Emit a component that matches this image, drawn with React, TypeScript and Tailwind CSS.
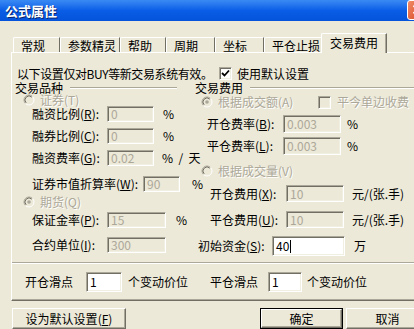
import React from 'react';

const dim = "text-[#ACA899] [text-shadow:1px_1px_0_#ffffff]";
const sunken = "border border-t-[#ACA899] border-l-[#ACA899] border-r-white border-b-white shadow-[inset_1px_1px_0_#716F64,inset_-1px_-1px_0_#F1EFE2]";
const raised = "border border-t-white border-l-white border-r-[#716F64] border-b-[#716F64] shadow-[inset_-1px_-1px_0_#ACA899]";

function Acc({ k }: { k: string }) {
  return <>(<span className="underline underline-offset-1">{k}</span>)</>;
}

function Field({ w, h, value, on }: { w: string; h: string; value: string; on?: boolean }) {
  return (
    <div className={`${w} ${h} shrink-0 ${sunken} flex items-center pl-[3px] ${on ? 'bg-white text-black' : 'bg-[#ECE9D8] text-[#ACA899]'}`}>
      {value}
      {on && value === '40' && <span className="ml-[1px] w-[1px] h-[13px] bg-black" />}
    </div>
  );
}

function Radio({ checked }: { checked?: boolean }) {
  return (
    <svg width="12" height="12" viewBox="0 0 12 12" className="shrink-0">
      <circle cx="6" cy="6" r="5" fill="#ECE9D8" />
      <path d="M2.46 9.54 A5 5 0 0 1 9.54 2.46" stroke="#ACA899" fill="none" />
      <path d="M9.54 2.46 A5 5 0 0 1 2.46 9.54" stroke="#ffffff" fill="none" />
      <path d="M3.17 8.83 A4 4 0 0 1 8.83 3.17" stroke="#716F64" fill="none" />
      {checked && <circle cx="6" cy="6" r="1.8" fill="#ACA899" />}
    </svg>
  );
}

function Check({ checked, on }: { checked?: boolean; on?: boolean }) {
  return (
    <div className={`w-[13px] h-[13px] shrink-0 ${sunken} ${on ? 'bg-white' : 'bg-[#ECE9D8]'} flex items-center justify-center`}>
      {checked && (
        <svg width="9" height="9" viewBox="0 0 9 9">
          <path d="M1 4 L3.5 6.5 L8 1.5" stroke="#000" strokeWidth="1.8" fill="none" />
        </svg>
      )}
    </div>
  );
}

function Etch({ w }: { w: string }) {
  return <div className={`${w} h-[2px] border-t border-t-[#ACA899] border-b border-b-white`} />;
}

const tabs = [
  { t: '常规', w: 'w-[47px]' },
  { t: '参数精灵', w: 'w-[60px]' },
  { t: '帮助', w: 'w-[46px]' },
  { t: '周期', w: 'w-[49px]' },
  { t: '坐标', w: 'w-[49px]' },
  { t: '平仓止损', w: 'w-[59px]' },
];

export default function App() {
  return (
    <div className="w-[414px] h-[329px] overflow-hidden whitespace-nowrap bg-[#ECE9D8] text-[12px] leading-[12px] text-black font-['Noto_Sans_CJK_SC','Noto_Sans',sans-serif]">
      {/* title bar */}
      <div className="h-[21px] flex items-center bg-gradient-to-b from-[#3A8AF4] via-[#0A5DE6] to-[#0553DA]">
        <span className="ml-[5px] text-white font-bold text-[13px] [text-shadow:1px_1px_0_#0A246A]">公式属性</span>
        <div className="ml-auto mr-[-14px] mt-[-2px] w-[21px] h-[20px] rounded-[3px] border border-white bg-gradient-to-br from-[#F08A66] to-[#D6411C] flex items-center justify-center">
          <svg width="11" height="11" viewBox="0 0 11 11">
            <path d="M1.5 1.5 L9.5 9.5 M9.5 1.5 L1.5 9.5" stroke="#fff" strokeWidth="2" />
          </svg>
        </div>
      </div>

      {/* tabs */}
      <div className="relative z-10 mt-[12px] mb-[-1px] h-[20px] flex items-end pl-[13px]">
        {tabs.map((tab) => (
          <div key={tab.t} className={`${tab.w} shrink-0 h-[15px] mb-[1px] pl-[7px] pt-[2px] border-t border-l border-t-white border-l-white border-r border-r-[#716F64] rounded-tl-[2px]`}>
            {tab.t}
          </div>
        ))}
        <div className="relative shrink-0 ml-[-2px] w-[66px] h-[20px] pl-[8px] pt-[3px] bg-[#ECE9D8] border-t border-l border-t-white border-l-white border-r border-r-[#716F64] shadow-[inset_-1px_0_0_#ACA899] rounded-tl-[2px]">
          交易费用
        </div>
      </div>

      {/* panel */}
      <div className="ml-[11px] w-[420px] h-[249px] border-t border-l border-t-white border-l-white border-b border-b-[#716F64] shadow-[inset_0_-1px_0_#ACA899] flex flex-col">
        <div className="mt-[13px] h-[15px] flex items-center">
          <span className="ml-[5px] w-[202px] shrink-0 tracking-[-0.4px]">以下设置仅对BUY等新交易系统有效。</span>
          <Check checked on />
          <span className="ml-[5px]">使用默认设置</span>
        </div>

        <div className="mt-[1px] flex">
          {/* left column */}
          <div className="w-[183px] shrink-0 flex flex-col">
            <div className="h-[12px] flex items-center pl-[3px]">
              <span>交易品种</span>
              <div className="ml-[7px]"><Etch w="w-[107px]" /></div>
            </div>
            <div className="h-[12px] flex items-center pl-[11px] gap-[5px]">
              <Radio />
              <span className={dim}>证券(T)</span>
            </div>
            <div className="h-[16px] flex items-center pl-[20px]">
              <span className="w-[75px] shrink-0">融资比例<Acc k="R" />:</span>
              <Field w="w-[47px]" h="h-[16px]" value="0" />
              <span className="ml-[9px]">%</span>
            </div>
            <div className="mt-[6px] h-[16px] flex items-center pl-[20px]">
              <span className="w-[75px] shrink-0">融券比例<Acc k="C" />:</span>
              <Field w="w-[47px]" h="h-[16px]" value="0" />
              <span className="ml-[9px]">%</span>
            </div>
            <div className="mt-[6px] h-[16px] flex items-center pl-[20px]">
              <span className="w-[75px] shrink-0">融资费率<Acc k="G" />:</span>
              <Field w="w-[47px]" h="h-[16px]" value="0.02" />
              <span className="ml-[8px] whitespace-pre">%  /  天</span>
            </div>
            <div className="mt-[10px] h-[16px] flex items-center pl-[20px]">
              <span className="w-[111px] shrink-0">证券市值折算率<Acc k="W" />:</span>
              <Field w="w-[37px]" h="h-[16px]" value="90" />
              <span className="ml-[12px]">%</span>
            </div>
            <div className="mt-[4px] h-[12px] flex items-center pl-[11px] gap-[5px]">
              <Radio checked />
              <span className={dim}>期货(Q)</span>
            </div>
            <div className="mt-[4px] h-[16px] flex items-center pl-[20px]">
              <span className="w-[75px] shrink-0">保证金率<Acc k="P" />:</span>
              <Field w="w-[59px]" h="h-[16px]" value="15" />
              <span className="ml-[10px]">%</span>
            </div>
            <div className="mt-[9px] h-[16px] flex items-center pl-[20px]">
              <span className="w-[75px] shrink-0">合约单位<Acc k="I" />:</span>
              <Field w="w-[59px]" h="h-[16px]" value="300" />
            </div>
          </div>

          {/* right column */}
          <div className="flex flex-col">
            <div className="h-[12px] flex items-center">
              <span>交易费用</span>
              <div className="ml-[7px]"><Etch w="w-[164px]" /></div>
            </div>
            <div className="mt-[1px] h-[14px] flex items-center pl-[6px]">
              <div className="w-[117px] shrink-0 flex items-center gap-[5px]">
                <Radio checked />
                <span className={dim}>根据成交额(A)</span>
              </div>
              <Check />
              <span className={`ml-[6px] ${dim}`}>平今单边收费</span>
            </div>
            <div className="mt-[6px] h-[18px] flex items-center pl-[12px]">
              <span className="w-[76px] shrink-0">开仓费率<Acc k="B" />:</span>
              <Field w="w-[58px]" h="h-[18px]" value="0.003" />
              <span className="ml-[6px]">%</span>
            </div>
            <div className="mt-[4px] h-[18px] flex items-center pl-[12px]">
              <span className="w-[76px] shrink-0">平仓费率<Acc k="L" />:</span>
              <Field w="w-[58px]" h="h-[18px]" value="0.003" />
              <span className="ml-[6px]">%</span>
            </div>
            <div className="mt-[10px] h-[12px] flex items-center pl-[6px] gap-[5px]">
              <Radio />
              <span className={dim}>根据成交量(V)</span>
            </div>
            <div className="mt-[8px] h-[17px] flex items-center pl-[15px]">
              <span className="w-[76px] shrink-0">开仓费用<Acc k="X" />:</span>
              <Field w="w-[58px]" h="h-[17px]" value="10" />
              <span className="ml-[8px]">元/(张.手)</span>
            </div>
            <div className="mt-[9px] h-[17px] flex items-center pl-[15px]">
              <span className="w-[76px] shrink-0">平仓费用<Acc k="U" />:</span>
              <Field w="w-[58px]" h="h-[17px]" value="10" />
              <span className="ml-[8px]">元/(张.手)</span>
            </div>
            <div className="mt-[8px] h-[20px] flex items-center pl-[3px]">
              <span className="w-[74px] shrink-0">初始资金<Acc k="S" />:</span>
              <Field w="w-[73px]" h="h-[20px]" value="40" on />
              <span className="ml-[9px]">万</span>
            </div>
          </div>
        </div>

        <div className="mt-[6px]"><Etch w="w-[420px]" /></div>

        <div className="mt-[8px] h-[20px] flex items-center">
          <div className="w-[198px] shrink-0 pl-[13px] flex items-center">
            <span className="w-[61px] shrink-0">开仓滑点</span>
            <Field w="w-[36px]" h="h-[20px]" value="1" on />
            <span className="ml-[6px]">个变动价位</span>
          </div>
          <span className="w-[58px] shrink-0">平仓滑点</span>
          <Field w="w-[34px]" h="h-[20px]" value="1" on />
          <span className="ml-[5px]">个变动价位</span>
        </div>
      </div>

      {/* buttons */}
      <div className="mt-[7px] flex">
        <button className={`ml-[12px] w-[114px] h-[21px] shrink-0 ${raised} bg-[#ECE9D8] flex items-center justify-center`}>
          设为默认设置<Acc k="F" />
        </button>
        <button className="ml-[134px] w-[83px] h-[21px] shrink-0 border border-black bg-[#ECE9D8] flex">
          <div className={`flex-1 ${raised} flex items-center justify-center`}>确定</div>
        </button>
        <button className={`ml-[3px] w-[83px] h-[21px] shrink-0 ${raised} bg-[#ECE9D8] flex items-center justify-center`}>
          取消
        </button>
      </div>
    </div>
  );
}
